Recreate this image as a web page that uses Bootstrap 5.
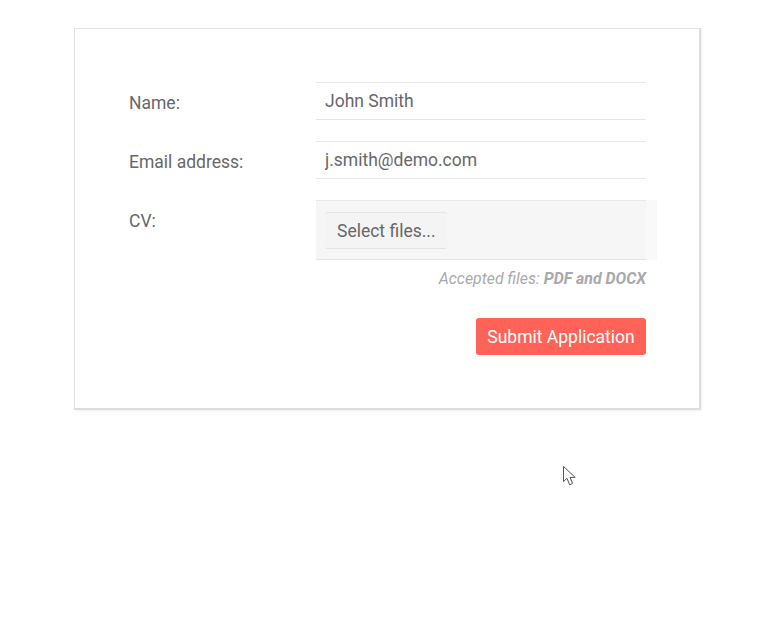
<!DOCTYPE html>
<html lang="en"><head><meta charset="utf-8"><title>Application</title>
<link href="https://cdn.jsdelivr.net/npm/bootstrap@5.3.0/dist/css/bootstrap.min.css" rel="stylesheet">
<style>
html,body{height:100%}
body{background:#fff;font-family:Roboto,"Liberation Sans",sans-serif;color:#656565;font-size:17px;overflow:hidden;position:relative}
.shell{margin:28px 0 0 74px;width:627px;height:382px;border:1px solid #e2e3e5;border-right-width:2px;border-bottom-width:2px;border-color:#e3e3e5 #dcdde0 #dcdde0 #e3e3e5;padding:53px 53px 0 54px;box-shadow:1px 1px 2px rgba(0,0,0,.06);background:#fff}
.rowline{margin-bottom:21px}
.lbl{width:187px;flex:none;line-height:20px;padding-top:11px;font-size:17.5px;color:#676769}
.fld{width:330px;height:38px;border-top:1px solid #e6e6e6;border-bottom:1px solid #e6e6e6;border-left:0;border-right:0;border-radius:0;padding:0 9px;font-size:17.5px;color:#676769;background:#fff;font-family:inherit;box-shadow:none}
.fld:focus{color:#676769;border-color:#e6e6e6;box-shadow:none}
.drop{width:330px;height:60px;background:#f6f6f6;border-top:1px solid #e8e8e8;border-bottom:1px solid #e4e4e4;padding:11px 9px 10px;box-shadow:11px 0 0 #f9f9f9}
.pick{height:37px;width:122px;padding:0 0 0 12px;text-align:left;background:#f4f4f4;border:0;border-top:1px solid #e2e2e2;border-bottom:1px solid #e2e2e2;border-radius:3px;font-size:17.5px;color:#676769;line-height:34px}
.pick:hover{background:#f4f4f4;color:#676769}
.note{font-size:15.9px;font-style:italic;color:#a8a9ab;line-height:18px;margin-top:10px;width:517px;text-align:right}
.note b{font-weight:700}
.send{margin-top:30px;width:170px;height:37px;padding:0;background:#ff6257;border:0;border-radius:3px;color:#fff;font-size:17.5px;line-height:36px}
.send:hover{background:#ff6257;color:#fff}
.wrapend{width:517px}
.pointer{position:absolute;left:563px;top:466px;width:14px;height:20px}
</style></head>
<body>
<form class="shell">
  <div class="d-flex rowline"><label class="lbl" for="n">Name:</label><input id="n" class="form-control fld" value="John Smith"></div>
  <div class="d-flex rowline"><label class="lbl" for="e">Email address:</label><input id="e" class="form-control fld" value="j.smith@demo.com"></div>
  <div class="d-flex"><div class="lbl">CV:</div><div class="drop"><button type="button" class="btn pick">Select files...</button></div></div>
  <div class="note">Accepted files: <b>PDF and DOCX</b></div>
  <div class="d-flex justify-content-end wrapend"><button type="button" class="btn send">Submit Application</button></div>
</form>
<svg class="pointer" viewBox="0 0 14 20" aria-hidden="true"><path d="M.5.5V15.5L4 12.3 6.6 18.8 9.6 17.5 7 11.4H12.2Z" fill="#fff" stroke="#555" stroke-width="1"/></svg>
<script src="https://cdn.jsdelivr.net/npm/bootstrap@5.3.0/dist/js/bootstrap.bundle.min.js"></script>
</body></html>
